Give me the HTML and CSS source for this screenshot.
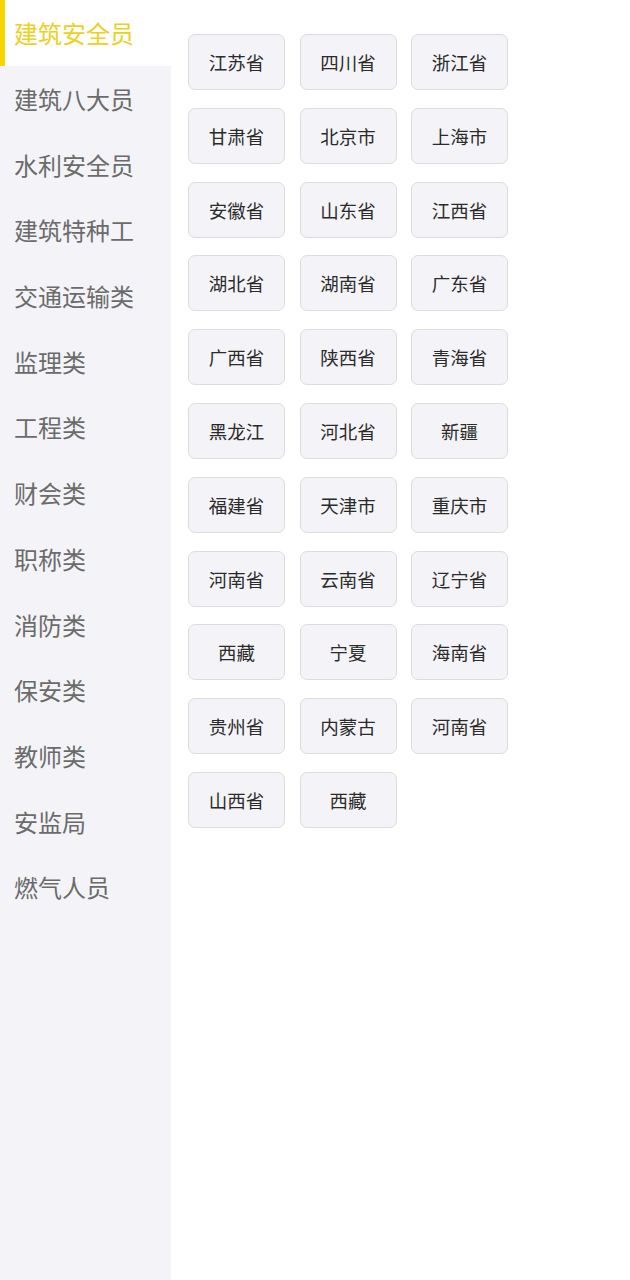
FILE: index.html
```
<!DOCTYPE html>
<html lang="zh-CN">
  <head>
    <meta charset="UTF-8" />
    <meta name="viewport" content="width=device-width, initial-scale=1.0" />
    <title>选择地区</title>
    <link rel="stylesheet" href="styles.css">
  </head>
  <body>
    <div class="page">
      <ul class="menu">
        <li class="menu-item active">建筑安全员</li>
        <li class="menu-item">建筑八大员</li>
        <li class="menu-item">水利安全员</li>
        <li class="menu-item">建筑特种工</li>
        <li class="menu-item">交通运输类</li>
        <li class="menu-item">监理类</li>
        <li class="menu-item">工程类</li>
        <li class="menu-item">财会类</li>
        <li class="menu-item">职称类</li>
        <li class="menu-item">消防类</li>
        <li class="menu-item">保安类</li>
        <li class="menu-item">教师类</li>
        <li class="menu-item">安监局</li>
        <li class="menu-item">燃气人员</li>
      </ul>

      <div class="content">
        <div class="regions">
          <span class="region">江苏省</span>
          <span class="region">四川省</span>
          <span class="region">浙江省</span>
          <span class="region">甘肃省</span>
          <span class="region">北京市</span>
          <span class="region">上海市</span>
          <span class="region">安徽省</span>
          <span class="region">山东省</span>
          <span class="region">江西省</span>
          <span class="region">湖北省</span>
          <span class="region">湖南省</span>
          <span class="region">广东省</span>
          <span class="region">广西省</span>
          <span class="region">陕西省</span>
          <span class="region">青海省</span>
          <span class="region">黑龙江</span>
          <span class="region">河北省</span>
          <span class="region">新疆</span>
          <span class="region">福建省</span>
          <span class="region">天津市</span>
          <span class="region">重庆市</span>
          <span class="region">河南省</span>
          <span class="region">云南省</span>
          <span class="region">辽宁省</span>
          <span class="region">西藏</span>
          <span class="region">宁夏</span>
          <span class="region">海南省</span>
          <span class="region">贵州省</span>
          <span class="region">内蒙古</span>
          <span class="region">河南省</span>
          <span class="region">山西省</span>
          <span class="region">西藏</span>
        </div>
      </div>
    </div>
  </body>
</html>
```

FILE: styles.css
```
:root {
  --side-background: #f4f4f8;
  --accent: #f7d600;
}

* {
  box-sizing: border-box;
}

body {
  margin: 0;
  background: #fff;
  font-family: "Noto Sans CJK SC", "Noto Sans", sans-serif;
}

.page {
  display: flex;
  min-height: 1280px;
}

.menu {
  width: 171px;
  margin: 0;
  padding: 0;
  list-style: none;
  background: var(--side-background);
}

.menu-item {
  height: 65.7px;
  display: flex;
  align-items: center;
  padding-left: 9px;
  font-size: 24px;
  color: #6b6b6b;
  border-left: 5px solid transparent;
}

.menu-item.active {
  background: #fff;
  color: #ecd022;
  border-left-color: var(--accent);
}

.content {
  flex: 1;
  padding: 34px 0 0 17px;
}

.regions {
  display: grid;
  grid-template-columns: repeat(3, 97px);
  column-gap: 14.5px;
  row-gap: 17.8px;
}

.region {
  height: 56px;
  display: flex;
  align-items: center;
  justify-content: center;
  font-size: 18.5px;
  color: #2b2b2b;
  background: var(--side-background);
  border: 1px solid #dcdcdf;
  border-radius: 7px;
}
```
